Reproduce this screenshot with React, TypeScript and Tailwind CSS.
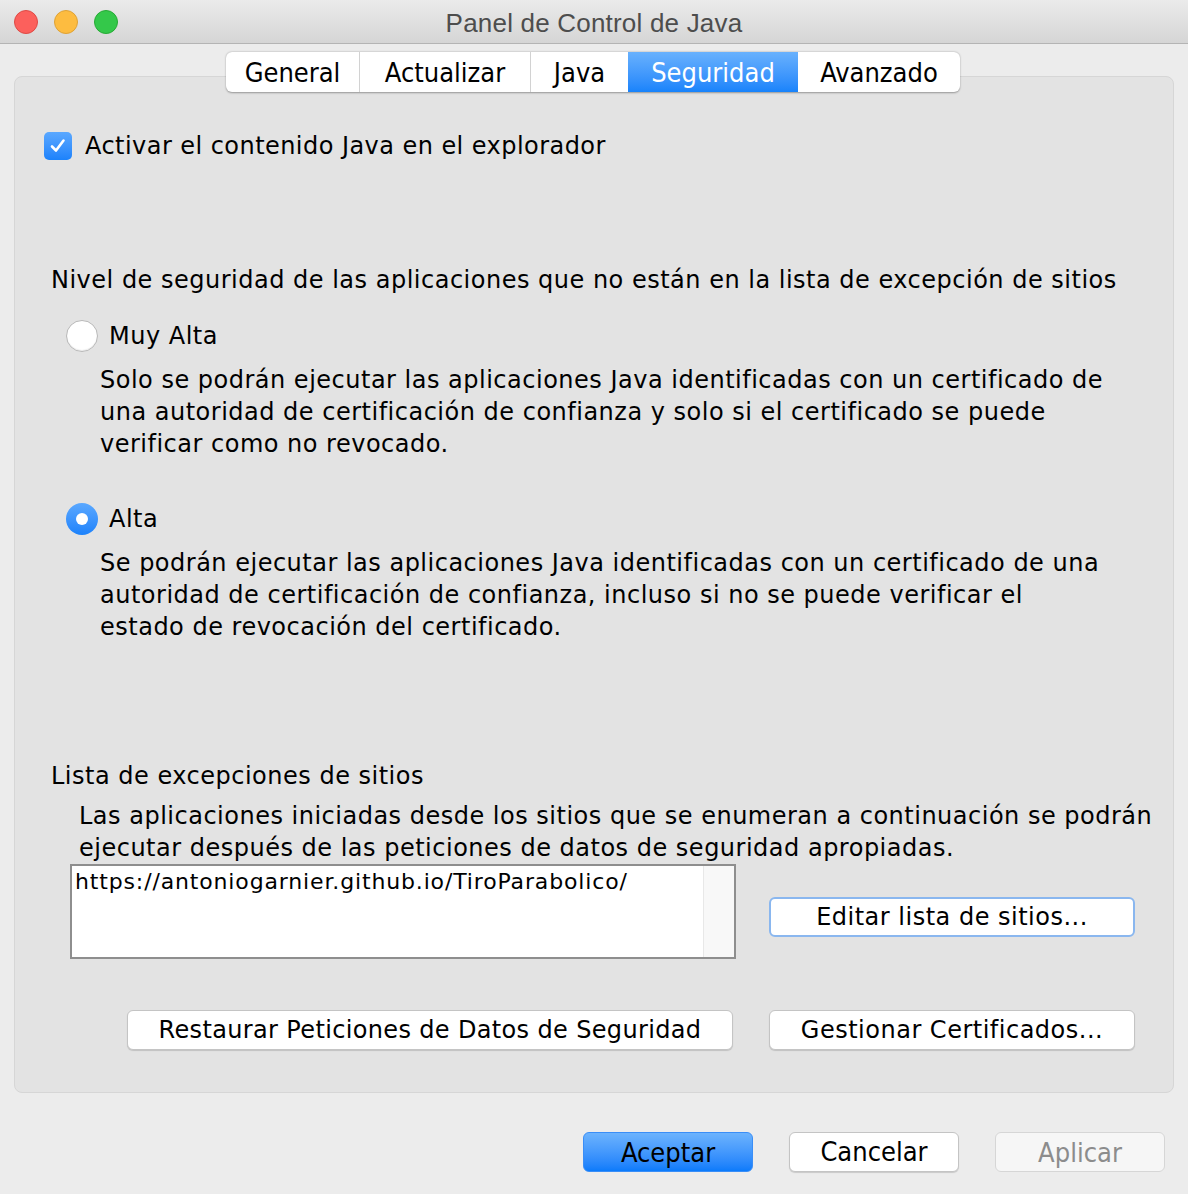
import React from 'react';

const SANS = "font-['DejaVu_Sans',sans-serif]";
const COND = "font-['DejaVu_Sans_Condensed','DejaVu_Sans',sans-serif]";

const tabs = ['General', 'Actualizar', 'Java', 'Seguridad', 'Avanzado'];
const tabWidths = ['w-[133px]', 'w-[171px]', 'w-[98px]', 'w-[170px]', 'w-[162px]'];

const Radio = ({ checked }: { checked: boolean }) =>
  checked ? (
    <span className="w-[32px] h-[32px] rounded-full bg-gradient-to-b from-[#5aa8ff] to-[#1b82fb] flex items-center justify-center shrink-0">
      <span className="w-[12px] h-[12px] rounded-full bg-white" />
    </span>
  ) : (
    <span className="w-[32px] h-[32px] rounded-full bg-white border border-[#b8b8b8] shadow-[inset_0_-1px_1px_rgba(0,0,0,0.08)] shrink-0" />
  );

const Button = ({ label, className = '', focus = false }: { label: string; className?: string; focus?: boolean }) => (
  <button
    className={`h-[40px] rounded-[6px] bg-white text-black flex items-center justify-center ${
      focus ? 'border-2 border-[#8ab7ef]' : 'border border-[#c4c4c4] shadow-[0_1px_1px_rgba(0,0,0,0.15)]'
    } ${className}`}
  >
    {label}
  </button>
);

export default function App() {
  return (
    <div className={`w-[1188px] h-[1194px] bg-[#ececec] flex flex-col ${SANS} text-black overflow-hidden`}>
      {/* title bar */}
      <div className="h-[44px] shrink-0 bg-gradient-to-b from-[#ebebeb] to-[#d5d5d5] border-b border-[#b4b4b4] flex items-center relative">
        <div className="flex gap-[16px] pl-[14px]">
          <span className="w-[24px] h-[24px] rounded-full bg-[#fc605c] border border-[#de4a45]" />
          <span className="w-[24px] h-[24px] rounded-full bg-[#fdbc40] border border-[#dea236]" />
          <span className="w-[24px] h-[24px] rounded-full bg-[#34c84a] border border-[#27aa35]" />
        </div>
        <div className="absolute inset-0 pt-[3px] flex items-center justify-center text-[26px] tracking-[0.2px] text-[#4d4d4d] font-['Liberation_Sans',sans-serif]">
          Panel de Control de Java
        </div>
      </div>

      {/* tab pane */}
      <div className="relative mx-[14px] mt-[32px] h-[1017px] bg-[#e3e3e3] border border-[#d6d6d6] rounded-[8px] shrink-0">
        <div className="absolute left-[211px] top-[-25px] flex rounded-[6px] shadow-[0_0.5px_2px_rgba(0,0,0,0.35)] overflow-hidden bg-white">
          {tabs.map((t, i) => (
            <div
              key={t}
              className={`h-[40px] pt-[2px] ${tabWidths[i]} flex items-center justify-center text-[27px] ${COND} ${
                i > 0 && i !== 3 && i !== 4 ? 'border-l border-[#d2d2d2]' : ''
              } ${i === 3 ? 'bg-gradient-to-b from-[#68b1fd] to-[#1783fb] text-white' : 'text-black'}`}
            >
              {t}
            </div>
          ))}
        </div>

        <div className="pt-[51px] pl-[29px] text-[24px] tracking-[0.45px]">
          <div className="flex items-center gap-[13px]">
            <span className="w-[28px] h-[28px] rounded-[5px] bg-gradient-to-b from-[#5aa8ff] to-[#1b82fb] flex items-center justify-center">
              <svg width="20" height="20" viewBox="0 0 20 20">
                <path d="M4 10.5 L8 14.5 L15.5 4.5" fill="none" stroke="white" strokeWidth="2.6" strokeLinecap="round" strokeLinejoin="round" />
              </svg>
            </span>
            <span>Activar el contenido Java en el explorador</span>
          </div>
        </div>

        <div className="pl-[36px] mt-[100px] text-[24px] tracking-[0.5px] leading-[32px]">
          <div>Nivel de seguridad de las aplicaciones que no están en la lista de excepción de sitios</div>

          <div className="pl-[15px] mt-[24px]">
            <div className="flex items-center gap-[11px] h-[32px]">
              <Radio checked={false} />
              <span>Muy Alta</span>
            </div>
            <div className="pl-[34px] mt-[12px]">
              Solo se podrán ejecutar las aplicaciones Java identificadas con un certificado de
              <br />
              una autoridad de certificación de confianza y solo si el certificado se puede
              <br />
              verificar como no revocado.
            </div>

            <div className="flex items-center gap-[11px] h-[32px] mt-[43px]">
              <Radio checked />
              <span>Alta</span>
            </div>
            <div className="pl-[34px] mt-[12px]">
              Se podrán ejecutar las aplicaciones Java identificadas con un certificado de una
              <br />
              autoridad de certificación de confianza, incluso si no se puede verificar el
              <br />
              estado de revocación del certificado.
            </div>
          </div>

          <div className="mt-[117px]">Lista de excepciones de sitios</div>
          <div className="pl-[28px] mt-[8px]">
            Las aplicaciones iniciadas desde los sitios que se enumeran a continuación se podrán
            <br />
            ejecutar después de las peticiones de datos de seguridad apropiadas.
          </div>

          <div className="flex items-start pl-[19px]">
            <div className="w-[666px] h-[95px] border-2 border-[#8e8e8e] bg-white flex">
              <div className="flex-1 pl-[3px] pt-[2px] text-[22px] tracking-[0.85px] leading-[28px]">
                https://antoniogarnier.github.io/TiroParabolico/
              </div>
              <div className="w-[31px] bg-[#f8f8f8] border-l border-[#e8e8e8]" />
            </div>
            <Button label="Editar lista de sitios..." focus className="ml-[33px] mt-[33px] w-[366px] text-[24px] tracking-[0.5px]" />
          </div>

          <div className="flex mt-[51px] pl-[76px] gap-[36px]">
            <Button label="Restaurar Peticiones de Datos de Seguridad" className="w-[606px] text-[24px] tracking-[0.35px]" />
            <Button label="Gestionar Certificados..." className="w-[366px] text-[24px] tracking-[0.5px]" />
          </div>
        </div>
      </div>

      {/* bottom buttons */}
      <div className="flex mt-[39px] pl-[583px] gap-[36px]">
        <button className={`w-[170px] h-[40px] rounded-[6px] bg-gradient-to-b from-[#6cb3fd] to-[#0a7bfb] border border-[#3a8ef7] text-black text-[27px] ${COND}`}>
          Aceptar
        </button>
        <Button label="Cancelar" className={`w-[170px] text-[27px] ${COND}`} />
        <button className={`w-[170px] h-[40px] rounded-[6px] bg-[#f6f6f6] border border-[#d6d6d6] text-[#8c8c8c] text-[27px] ${COND}`}>
          Aplicar
        </button>
      </div>
    </div>
  );
}
